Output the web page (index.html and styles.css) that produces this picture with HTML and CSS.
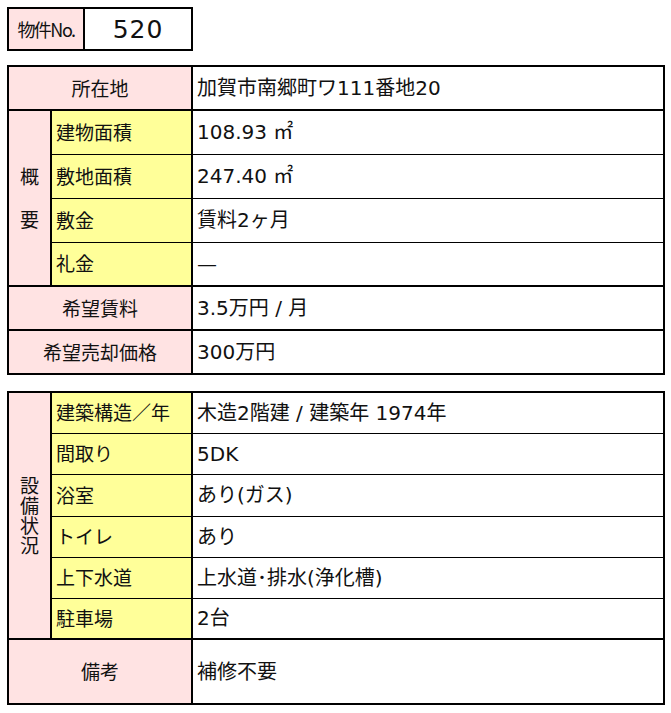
FILE: index.html
```html
<!DOCTYPE html>
<html lang="ja">
<head>
<meta charset="utf-8">
<link rel="stylesheet" href="styles.css">
</head>
<body>
<table class="no-box">
  <tr>
    <td class="no-label">物件No.</td>
    <td class="no-value">520</td>
  </tr>
</table>

<table class="sheet sheet-1">
  <colgroup><col class="c1"><col class="c2"><col class="c3"></colgroup>
  <tr class="r44 thick">
    <th colspan="2" class="pink">所在地</th>
    <td class="val">加賀市南郷町ワ111番地20</td>
  </tr>
  <tr class="r44 thick">
    <th rowspan="4" class="pink vcell"><span class="vtext gaiyo">概要</span></th>
    <th class="yellow">建物面積</th>
    <td class="val">108.93 ㎡</td>
  </tr>
  <tr class="r44">
    <th class="yellow">敷地面積</th>
    <td class="val">247.40 ㎡</td>
  </tr>
  <tr class="r44">
    <th class="yellow">敷金</th>
    <td class="val">賃料2ヶ月</td>
  </tr>
  <tr class="r44">
    <th class="yellow">礼金</th>
    <td class="val">—</td>
  </tr>
  <tr class="r44 thick">
    <th colspan="2" class="pink">希望賃料</th>
    <td class="val">3.5万円 / 月</td>
  </tr>
  <tr class="r44 thick">
    <th colspan="2" class="pink">希望売却価格</th>
    <td class="val">300万円</td>
  </tr>
</table>

<table class="sheet sheet-2">
  <colgroup><col class="c1"><col class="c2"><col class="c3"></colgroup>
  <tr class="r41">
    <th rowspan="6" class="pink vcell"><span class="vtext setsubi">設備状況</span></th>
    <th class="yellow">建築構造／年</th>
    <td class="val">木造2階建 / 建築年 1974年</td>
  </tr>
  <tr class="r41">
    <th class="yellow">間取り</th>
    <td class="val">5DK</td>
  </tr>
  <tr class="r42">
    <th class="yellow">浴室</th>
    <td class="val">あり(ガス)</td>
  </tr>
  <tr class="r41">
    <th class="yellow">トイレ</th>
    <td class="val">あり</td>
  </tr>
  <tr class="r41">
    <th class="yellow">上下水道</th>
    <td class="val">上水道･排水(浄化槽)</td>
  </tr>
  <tr class="r41">
    <th class="yellow">駐車場</th>
    <td class="val">2台</td>
  </tr>
  <tr class="r65 thick">
    <th colspan="2" class="pink">備考</th>
    <td class="val">補修不要</td>
  </tr>
</table>
</body>
</html>
```

FILE: styles.css
```css
html, body {
  margin: 0;
  padding: 0;
  background: #ffffff;
}

body {
  padding: 7px 0 0 7px;
  font-family: "Noto Sans CJK JP", "Noto Sans", sans-serif;
  color: #111111;
}

table {
  border-collapse: collapse;
  table-layout: fixed;
}

.no-box {
  width: 186px;
  height: 44px;
  border: 2px solid #000;
}

.no-box td {
  border: 2px solid #000;
  padding: 0;
  line-height: 1;
}

.no-label {
  width: 74px;
  background: #ffe3e3;
  font-size: 18px;
  letter-spacing: -1.5px;
  text-align: center;
  padding-top: 1px;
}

.no-value {
  font-family: "DejaVu Sans", "Noto Sans CJK JP", sans-serif;
  font-size: 25px;
  text-align: center;
  letter-spacing: 1px;
}

.sheet {
  width: 658px;
  border: 2.5px solid #000;
  font-size: 19px;
  line-height: 1.2;
}

.sheet-1 {
  margin-top: 14px;
}

.sheet-2 {
  margin-top: 16px;
}

.c1 { width: 43px; }
.c2 { width: 141px; }
.c3 { width: auto; }

.sheet th,
.sheet td {
  border: 1px solid #000;
  padding: 0 4px;
  font-weight: normal;
  vertical-align: middle;
}

.sheet th.pink,
.sheet th.yellow {
  border-right-width: 2px;
}

.sheet tr.thick > * {
  border-top-width: 2px;
}

.r44 { height: 44px; }
.r41 { height: 41px; }
.r42 { height: 42px; }
.r65 { height: 65px; }

.pink {
  background: #ffe3e3;
  text-align: center;
}

.yellow {
  background: #ffff99;
  text-align: left;
}

.val {
  text-align: left;
  background: #ffffff;
  font-family: "DejaVu Sans", "Noto Sans CJK JP", sans-serif;
  font-size: 20px;
  padding-left: 4px;
}

.vcell {
  padding: 0;
}

.vtext {
  display: inline-block;
  writing-mode: vertical-rl;
  text-orientation: upright;
  line-height: 1;
}

.gaiyo {
  letter-spacing: 24px;
  margin-bottom: -24px;
  margin-top: 4px;
}

.setsubi {
  letter-spacing: 1px;
  margin-top: 4px;
}
```
